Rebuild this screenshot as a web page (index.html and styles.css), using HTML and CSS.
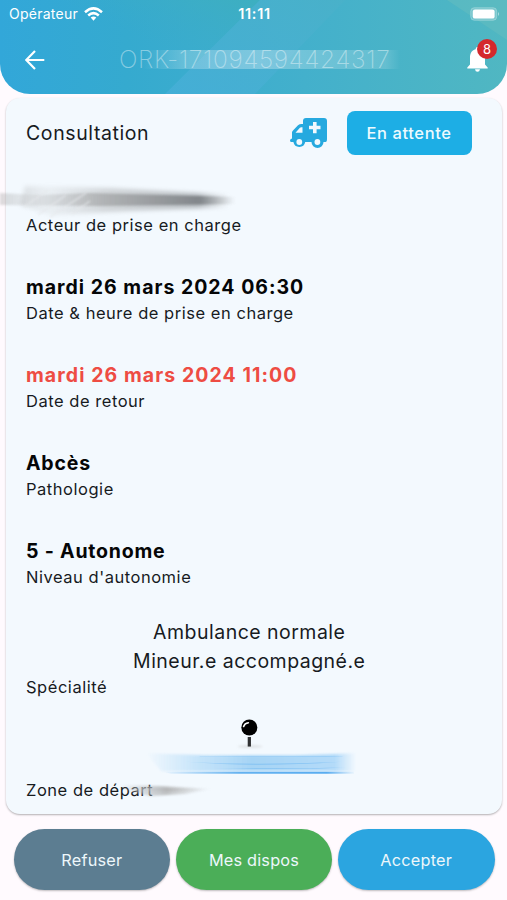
FILE: index.html
```html
<!DOCTYPE html>
<html lang="fr">
<head>
<meta charset="utf-8">
<title>Consultation</title>
<link rel="stylesheet" href="styles.css">
</head>
<body>
<header class="header">
  <svg class="header-bg" viewBox="0 0 507 94" preserveAspectRatio="none" aria-hidden="true">
    <defs>
      <linearGradient id="h1" x1="0" y1="0" x2="1" y2="0"><stop offset="0" stop-color="#32a7d9"/><stop offset=".25" stop-color="#35aacf"/><stop offset=".6" stop-color="#43b0cc"/><stop offset="1" stop-color="#50b7c2"/></linearGradient>
      <linearGradient id="h2" x1="0" y1="1" x2="1" y2="0"><stop offset="0" stop-color="#48afd9"/><stop offset="1" stop-color="#4ab1c9"/></linearGradient>
      <linearGradient id="h3" x1="0" y1="1" x2="1" y2="0"><stop offset=".5" stop-color="#3aabc8" stop-opacity="0"/><stop offset="1" stop-color="#3dafc0"/></linearGradient>
    </defs>
    <path d="M0 0H507V94H0Z" fill="url(#h1)"/>
    <path d="M60 0H260L165 94H60Z" fill="url(#h3)"/>
    <path d="M260 0H345L255 94H165Z" fill="url(#h2)" opacity=".75"/>
    <path d="M447 0H507V40Z" fill="#66bdbf" opacity=".5"/>
  </svg>
  <div class="status">
    <div class="carrier"><span class="operator">Opérateur</span>
      <svg width="19" height="14" viewBox="0 0 19 14" fill="none" stroke="#fff" stroke-width="2.5"><path d="M1 5.2Q9.5-2.5 18 5.2"/><path d="M4.2 8.5Q9.5 3.8 14.8 8.5"/><path d="M6.7 10.6Q9.5 8.2 12.3 10.6L9.5 13.7Z" fill="#fff" stroke="none"/></svg>
    </div>
    <span class="time">11:11</span>
    <svg class="battery" width="30" height="14" viewBox="0 0 30 14"><rect x=".7" y=".7" width="26" height="12.6" rx="3.6" fill="#fff" fill-opacity=".2" stroke="#fff" stroke-opacity=".25"/><rect x="2.8" y="2.4" width="21.8" height="9.2" rx="2.2" fill="#fff"/><path d="M28 5Q30 7 28 9Z" fill="#fff" opacity=".5"/></svg>
  </div>
  <div class="bar">
    <svg class="back" width="20" height="20" viewBox="0 0 20 20" fill="none" stroke="#fff" stroke-width="2.2"><path d="M19.3 10H1.5M10 1L1.2 10L10 19"/></svg>
    <div class="reference"><span class="reference-text">ORK-171094594424317</span></div>
    <div class="alerts">
      <svg width="21" height="25" viewBox="0 0 21 25" fill="#fff"><path d="M10.5 0Q12.3 0 12.4 2.3C16.5 3.3 18 6.8 18 10.5V17.5L20.7 20.4V21.4H.3V20.4L3 17.5V10.5C3 6.8 4.5 3.3 8.6 2.3Q8.7 0 10.5 0Z"/><path d="M8 22.3H13Q12.6 24.8 10.5 24.8T8 22.3Z"/></svg>
      <span class="badge">8</span>
    </div>
  </div>
</header>
<main class="card">
  <div class="card-head">
    <h1 class="title">Consultation</h1>
    <svg class="ambulance" width="37" height="30" viewBox="0 0 37 30"><path fill="#26a9df" fill-rule="evenodd" d="M16 0H34Q37 0 37 3V21Q37 24 35.5 24H33.5A6 6 0 0 1 21.5 24H15.2A6 6 0 0 1 3.4 24H1.5Q0 24 0 22.5T2 20.5V14.5Q2 13.5 3 12.5L8 7.3Q9.5 6 11.5 6H13V3Q13 0 16 0ZM12.5 9.2H11.2Q10.5 9.2 9.9 9.8L5.5 14.8H12.5ZM23 4V7.8H19V11.3H23V15.2H26.6V11.3H30.5V7.8H26.6V4Z"/><circle cx="9.3" cy="24" r="2.9" fill="#f3f9fe"/><circle cx="27.4" cy="24" r="2.9" fill="#f3f9fe"/></svg>
    <span class="tag">En attente</span>
  </div>
  <section class="field">
    <div class="value"></div>
    <div class="label">Acteur de prise en charge</div>
    <svg class="smear smear-actor" width="240" height="44" viewBox="0 0 240 44" aria-hidden="true">
      <defs><linearGradient id="s1"><stop offset="0" stop-color="#999" stop-opacity=".5"/><stop offset=".13" stop-color="#aaa" stop-opacity=".25"/><stop offset=".4" stop-color="#888" stop-opacity=".6"/><stop offset=".85" stop-color="#606468" stop-opacity=".85"/><stop offset="1" stop-color="#777" stop-opacity="0"/></linearGradient></defs>
      <path class="soft" d="M25 5L110 7L230 14V26L130 30L50 34L20 24Z" fill="url(#s1)" opacity=".5"/>
      <path class="soft-small" d="M0 12L40 14L90 12L236 16V23L100 25L0 24Z" fill="url(#s1)" opacity=".7"/>
      <path class="soft-small" d="M38 34L66 14M50 36L86 12M24 26L48 9M72 33L90 20" stroke="#e5e8eb" stroke-width="2" opacity=".6"/>
    </svg>
  </section>
  <section class="field"><div class="value">mardi 26 mars 2024 06:30</div><div class="label">Date &amp; heure de prise en charge</div></section>
  <section class="field"><div class="value late">mardi 26 mars 2024 11:00</div><div class="label">Date de retour</div></section>
  <section class="field"><div class="value short">Abcès</div><div class="label">Pathologie</div></section>
  <section class="field"><div class="value short">5 - Autonome</div><div class="label">Niveau d'autonomie</div></section>
  <section class="specialty">
    <div class="options"><span class="option-one">Ambulance normale</span><span class="option-two">Mineur.e accompagné.e</span></div>
    <div class="label">Spécialité</div>
  </section>
  <section class="zone">
    <svg class="map" width="230" height="64" viewBox="0 0 230 64" aria-hidden="true">
      <defs>
        <linearGradient id="b1"><stop offset="0" stop-color="#b5dcf8" stop-opacity="0"/><stop offset=".25" stop-color="#b5dcf8" stop-opacity=".75"/><stop offset=".5" stop-color="#a6d4f5"/><stop offset=".9" stop-color="#b4dbf9"/><stop offset="1" stop-color="#b4dbf9" stop-opacity="0"/></linearGradient>
        <linearGradient id="b2" gradientUnits="userSpaceOnUse" x1="20" y1="0" x2="224" y2="0"><stop offset="0" stop-color="#53aaf0" stop-opacity="0"/><stop offset=".4" stop-color="#64b2f0"/><stop offset=".85" stop-color="#58acf0"/><stop offset="1" stop-color="#64b2f0" stop-opacity="0"/></linearGradient>
      </defs>
      <path class="soft-small" d="M4 38L70 40H160L224 38V57H20Z" fill="url(#b1)"/>
      <path d="M22 57.5H222V59.5H30Z" fill="url(#b2)"/>
      <path d="M45 47Q120 51 210 47Q120 53 45 47ZM75 53.5Q150 54.5 215 53Q150 56 75 53.5ZM60 41.5H210V42H60Z" fill="url(#b2)" opacity=".5"/>
      <ellipse class="soft-small" cx="113" cy="31" rx="13" ry="1.5" fill="#dfe3e6"/>
      <rect x="110.5" y="21" width="3.4" height="10" fill="#303234"/>
      <circle cx="112.2" cy="11" r="8.4" fill="#000"/>
      <path d="M106.2 10Q107.2 6.5 111.2 6" fill="none" stroke="#fff" stroke-width="1.7" stroke-linecap="round"/>
    </svg>
    <div class="label">Zone de départ</div>
    <svg class="smear smear-zone" width="95" height="20" viewBox="0 0 95 20" aria-hidden="true">
      <defs><linearGradient id="s2"><stop offset="0" stop-color="#c8cbce" stop-opacity="0"/><stop offset=".25" stop-color="#c5c9cc" stop-opacity=".6"/><stop offset=".5" stop-color="#aaa" stop-opacity=".7"/><stop offset="1" stop-color="#bbb" stop-opacity="0"/></linearGradient></defs>
      <path class="soft-small" d="M0 3L40 4L92 7L65 12L30 14L8 9Z" fill="url(#s2)"/>
      <path class="soft-small" d="M5 6.5L90 7L50 9L10 8Z" fill="url(#s2)"/>
    </svg>
  </section>
</main>
<footer class="actions">
  <button class="action refuse">Refuser</button>
  <button class="action slots">Mes dispos</button>
  <button class="action accept">Accepter</button>
</footer>
</body>
</html>
```
FILE: styles.css
```css
* { box-sizing: border-box; }
body { margin: 0; width: 507px; height: 900px; overflow: hidden; background: #fffafe; font-family: Inter, "Liberation Sans", sans-serif; color: #171b1f; white-space: nowrap; }
svg { display: block; flex: none; }
.header { position: relative; height: 94px; overflow: hidden; border-radius: 0 0 30px 30px; color: #fff; }
.header-bg { position: absolute; inset: 0; width: 100%; height: 100%; }
.status { position: relative; display: grid; grid-template-columns: 1fr auto 1fr; align-items: center; height: 27px; padding: 0 7px 0 9px; }
.carrier { display: flex; align-items: center; gap: 6px; }
.operator { font-size: 14px; letter-spacing: .25px; }
.time { font-size: 14.5px; font-weight: 600; letter-spacing: .7px; }
.battery { justify-self: end; }
.bar { position: relative; display: flex; align-items: center; height: 65px; padding: 0 19px 0 25px; }
.reference { width: 290px; height: 19px; margin-left: 74px; line-height: 19px; background: linear-gradient(90deg, #ffffff00 8%, #ffffff38 22%, #ffffff4d 48%, #ffffff28 92%, #ffffff00 97%); }
.reference-text { font-size: 24.5px; font-weight: 200; letter-spacing: .65px; color: #ffffff68; }
.alerts { position: relative; margin-left: auto; }
.badge { position: absolute; left: 10px; top: -8px; width: 20px; height: 20px; border-radius: 50%; background: #d4292d; text-align: center; font-size: 13px; line-height: 20px; }
.card { width: 496px; height: 716px; margin: 4px 0 0 6px; padding: 13px 30.5px 0 20px; border-radius: 14px; background: #f3f9fe; box-shadow: 0 1px 2px #0000004d; }
.card-head { display: flex; align-items: center; height: 44px; margin-bottom: 30px; }
.title { margin: 0; font-size: 19.5px; font-weight: 400; letter-spacing: .6px; }
.ambulance { margin-left: auto; }
.tag { width: 125px; height: 44px; margin-left: 20px; border-radius: 8px; background: #1daee5; color: #edfaff; text-align: center; font-size: 16.5px; font-weight: 500; line-height: 44px; letter-spacing: .6px; }
.field { position: relative; height: 54px; margin-bottom: 34px; }
.value { height: 28px; line-height: 28px; font-size: 19.5px; font-weight: 700; letter-spacing: 1px; color: #050607; }
.late { color: #ee4c43; letter-spacing: 1.07px; }
.short { letter-spacing: .8px; }
.label { height: 26px; line-height: 24px; font-size: 16.5px; letter-spacing: .53px; }
.smear { position: absolute; }
.smear-actor { left: -26px; top: -4px; }
.soft { filter: blur(2px); }
.soft-small { filter: blur(1px); }
.specialty { margin-top: -7px; }
.options { display: flex; flex-direction: column; align-items: center; height: 57px; padding-left: 1px; line-height: 29px; font-size: 19.5px; letter-spacing: .48px; }
.zone { position: relative; margin-top: 16px; }
.map { height: 61px; margin-left: 111px; overflow: visible; }
.smear-zone { left: 94px; top: 65px; }
.actions { display: flex; gap: 5.5px; padding: 15px 12.5px 0 13.5px; }
.action { flex: 1; height: 61px; padding: 0; border: 0; border-radius: 31px; color: #edf7fb; font: 400 16.3px Inter, sans-serif; letter-spacing: .2px; box-shadow: 0 1px 2px #00000040; }
.refuse { background: #5c7d91; }
.slots { background: #4bae58; }
.accept { background: #2ba5e0; }
```
